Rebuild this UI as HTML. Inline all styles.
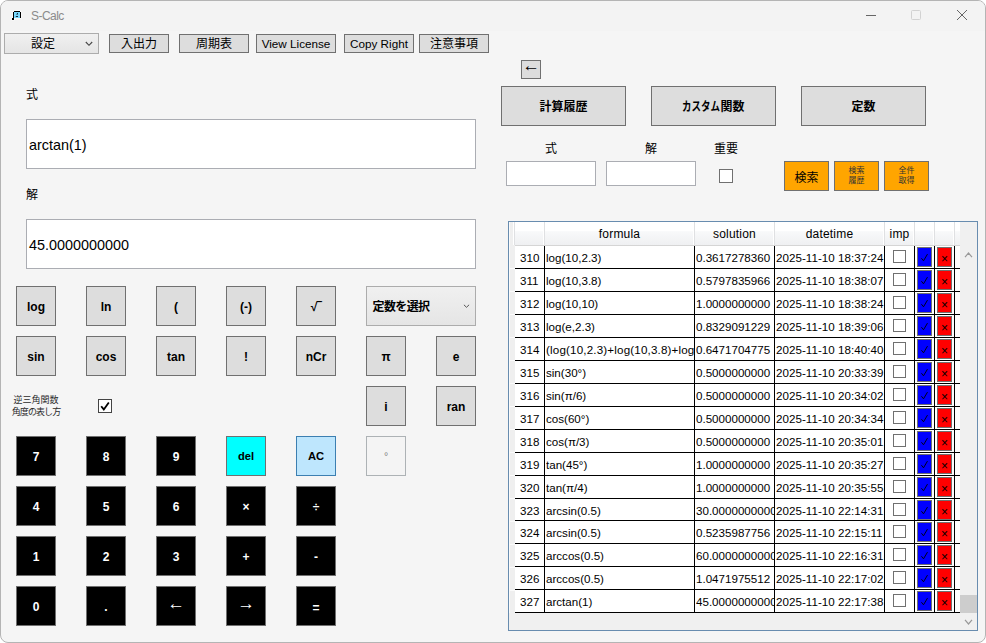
<!DOCTYPE html>
<html lang="ja"><head><meta charset="utf-8"><title>S-Calc</title>
<style>
html,body{margin:0;padding:0}
body{width:986px;height:643px;overflow:hidden;background:#fff;position:relative;
 font-family:"Liberation Sans","Noto Sans CJK JP",sans-serif;font-size:12px;color:#000}
#win{position:absolute;left:0;top:0;width:984px;height:641px;border:1px solid #b4b4b4;border-radius:8px;background:#f5f5f5;overflow:hidden}
#win>*{position:absolute}
/* everything inside #win is positioned relative to the padding box (offset 1,1): use .abs wrapper */
#o{left:-1px;top:-1px;width:986px;height:643px}
#o>*{position:absolute;box-sizing:border-box}
#tb{left:1px;top:1px;width:984px;height:30px;background:#f3f3f3}
#title{left:31px;top:8px;font-size:12px;letter-spacing:-0.55px;color:#8b8b8b;line-height:16px;white-space:nowrap}
.btn{background:#ddd;border:1px solid #707070;display:flex;align-items:center;justify-content:center;white-space:nowrap;line-height:1;font-size:11.7px}
.k{width:40px;height:40px;font-weight:bold;font-size:12px;padding-top:1px}
.btn.j{font-size:12px}
.ar{font-family:"Noto Sans CJK JP","Liberation Sans",sans-serif}
.blk{background:#000;color:#fff}
.lbl{white-space:nowrap;line-height:14px}
.tbx{background:#fff;border:1px solid #abadb3}
.tbx span{position:absolute;left:2px;font-size:14.4px;white-space:nowrap}
.combo{border:1px solid #acacac;background:linear-gradient(#f0f0f0,#e5e5e5);display:flex;align-items:center;white-space:nowrap}
.chk{background:#fff;border:1px solid #707070}
.or{background:#ffa500;border:1px solid #707070;display:flex;align-items:center;justify-content:center;text-align:center;white-space:nowrap}
/* grid */
#grid{left:508px;top:221px;width:470px;height:410px;border:1px solid #688caf;background:#f0f0f0;overflow:hidden}
#gridw{left:509px;top:222px;width:451px;height:391px;background:#fff}
#hdr{left:509px;top:222px;width:451px;height:24px;background:linear-gradient(#fff 0,#fff 38%,#f8f9fa 42%,#eff0f2 100%);border-bottom:1px solid #d5d5d5}
.h{position:absolute;top:223px;height:23px;line-height:23px;text-align:center;font-size:12px;letter-spacing:0.2px;white-space:nowrap}
.vs{width:1px;background:#000;top:246px;height:367px}
.hs{width:2px;top:222px;height:23px;background:linear-gradient(90deg,#fff 50%,#dfe0e2 50%);margin-left:-1px}
.row{left:515px;width:445px;height:23px;border-bottom:1px solid #000}
.row>*{position:absolute;box-sizing:border-box}
.c{top:0;height:22px;line-height:24px;white-space:nowrap;overflow:hidden;font-size:11.6px}
.c0{left:5px;width:25px}
.c1{left:31px;width:149px}
.c2{left:181px;width:78px}
.c3{left:261px;width:108px;letter-spacing:0.03px}
.cb{left:378px;top:4px;width:13px;height:13px;border:1px solid #707070;background:#fff}
.bb{left:402px;top:1px;width:15px;height:20px;background:#00f;border:1px solid #707070}
.bb svg{position:absolute;left:0;top:0}
.rb{left:422px;top:1px;width:15px;height:20px;background:#f00;border:1px solid #707070;display:flex;align-items:center;justify-content:center;font-weight:normal;font-size:12px;line-height:1;padding-top:3px}
.al{font-size:17.5px;font-weight:bold;position:relative;top:-4px;line-height:12px}

</style></head>
<body>
<div id="win"><div id="o">
<div id="tb"></div>
<svg style="left:11px;top:10px" width="12" height="12" viewBox="0 0 12 12"><path d="M0.5 8.2V7.5H1.5V1.5L2.5 0.5H9.5L10.5 1.5V8.5H3.5V10.5H0.5Z" fill="#fff" opacity="0.8"/><rect x="3" y="2" width="6" height="6" fill="#7ad7fb"/><rect x="3" y="1" width="6" height="1" fill="#000"/><rect x="2" y="2" width="1" height="7" fill="#000"/><rect x="9" y="2" width="1" height="6" fill="#000"/><rect x="1" y="8" width="2" height="2" fill="#000"/><path d="M5.2 4.6L6.3 3L6.9 3L6.9 4.6Z" fill="#012"/><rect x="4.8" y="6" width="2.2" height="1" fill="#123"/></svg>
<div id="title">S-Calc</div>
<svg style="left:860px;top:5px" width="120" height="22" viewBox="0 0 120 22"><path d="M6 10.5H16" stroke="#666" stroke-width="1" fill="none"/><rect x="51.5" y="5.5" width="9" height="9" rx="1" fill="none" stroke="#d2d2d2" stroke-width="1"/><path d="M97 5L107 15M107 5L97 15" stroke="#666" stroke-width="1" fill="none"/></svg>

<!-- toolbar -->
<div class="combo" style="left:4px;top:33px;width:95px;height:21px"><span style="position:absolute;left:26px;top:3px;line-height:14px">設定</span><svg style="position:absolute;right:5px;top:7px" width="8" height="6" viewBox="0 0 8 6"><path d="M0.8 1L4 4.3L7.2 1" fill="none" stroke="#444" stroke-width="1.1"/></svg></div>
<div class="btn j" style="left:109px;top:34px;width:60px;height:19px">入出力</div>
<div class="btn j" style="left:179px;top:34px;width:70px;height:19px">周期表</div>
<div class="btn" style="left:256px;top:34px;width:80px;height:19px">View License</div>
<div class="btn" style="left:344px;top:34px;width:70px;height:19px">Copy Right</div>
<div class="btn j" style="left:419px;top:34px;width:70px;height:19px">注意事項</div>

<!-- left -->
<div class="lbl" style="left:26px;top:88px">式</div>
<div class="tbx" style="left:26px;top:119px;width:450px;height:50px"><span style="top:17px;line-height:17px">arctan(1)</span></div>
<div class="lbl" style="left:26px;top:188px">解</div>
<div class="tbx" style="left:26px;top:219px;width:450px;height:50px"><span style="top:17px;line-height:17px">45.0000000000</span></div>

<div class="btn k" style="left:16px;top:286px">log</div>
<div class="btn k" style="left:86px;top:286px">ln</div>
<div class="btn k" style="left:156px;top:286px">(</div>
<div class="btn k" style="left:226px;top:286px">(-)</div>
<div class="btn k" style="left:296px;top:286px">√‾</div>
<div class="combo" style="left:366px;top:286px;width:110px;height:40px;font-weight:bold;padding-top:1px"><span style="position:absolute;left:5.5px;top:13px;line-height:14px;letter-spacing:-0.6px">定数を選択</span><svg style="position:absolute;right:5.5px;top:17px" width="7" height="5" viewBox="0 0 7 5"><path d="M0.9 0.8L3.5 3.3L6.1 0.8" fill="none" stroke="#555" stroke-width="1"/></svg></div>

<div class="btn k" style="left:16px;top:336px">sin</div>
<div class="btn k" style="left:86px;top:336px">cos</div>
<div class="btn k" style="left:156px;top:336px">tan</div>
<div class="btn k" style="left:226px;top:336px">!</div>
<div class="btn k" style="left:296px;top:336px">nCr</div>
<div class="btn k" style="left:366px;top:336px">π</div>
<div class="btn k" style="left:436px;top:336px">e</div>

<div class="lbl" style="left:0px;top:394px;width:72px;text-align:center;font-size:9px;line-height:12px;color:#2a2a2a">逆三角関数<br><span style="letter-spacing:-0.9px">角度の表し方</span></div>
<div class="chk" style="left:98px;top:399px;width:14px;height:14px;border-color:#444"><svg style="position:absolute;left:1px;top:1px" width="10" height="10" viewBox="0 0 10 10"><path d="M1.2 5.2L3.8 8.4L8.8 1.4" fill="none" stroke="#000" stroke-width="1.8"/></svg></div>
<div class="btn k" style="left:366px;top:386px">i</div>
<div class="btn k" style="left:436px;top:386px">ran</div>

<div class="btn k blk" style="left:16px;top:436px">7</div>
<div class="btn k blk" style="left:86px;top:436px">8</div>
<div class="btn k blk" style="left:156px;top:436px">9</div>
<div class="btn k" style="left:226px;top:436px;background:#0ff;font-size:11.2px">del</div>
<div class="btn k" style="left:296px;top:436px;background:#bee6fd;border-color:#3c7fb1;font-size:11.2px">AC</div>
<div class="btn k" style="left:366px;top:436px;background:#f4f4f4;border-color:#adb2b5;color:#838383;font-size:10.5px;font-weight:normal;padding-top:0">°</div>

<div class="btn k blk" style="left:16px;top:486px">4</div>
<div class="btn k blk" style="left:86px;top:486px">5</div>
<div class="btn k blk" style="left:156px;top:486px">6</div>
<div class="btn k blk" style="left:226px;top:486px">×</div>
<div class="btn k blk" style="left:296px;top:486px">÷</div>

<div class="btn k blk" style="left:16px;top:536px">1</div>
<div class="btn k blk" style="left:86px;top:536px">2</div>
<div class="btn k blk" style="left:156px;top:536px">3</div>
<div class="btn k blk" style="left:226px;top:536px">+</div>
<div class="btn k blk" style="left:296px;top:536px">-</div>

<div class="btn k blk" style="left:16px;top:586px">0</div>
<div class="btn k blk" style="left:86px;top:586px">.</div>
<div class="btn k blk" style="left:156px;top:586px"><span class="al">←</span></div>
<div class="btn k blk" style="left:226px;top:586px"><span class="al">→</span></div>
<div class="btn k blk" style="left:296px;top:586px"><span style="position:relative;top:1px">=</span></div>

<!-- right -->
<div class="btn" style="left:521px;top:60px;width:20px;height:19px"><span class="al" style="font-weight:normal;top:-5px">←</span></div>
<div class="btn j" style="left:501px;top:86px;width:125px;height:40px;font-weight:bold;padding-top:1px">計算履歴</div>
<div class="btn j" style="left:651px;top:86px;width:125px;height:40px;font-weight:bold;padding-top:1px"><span style="display:inline-block;transform:scaleX(0.79);transform-origin:0 50%;margin-right:-10px">カスタム</span>関数</div>
<div class="btn j" style="left:801px;top:86px;width:125px;height:40px;font-weight:bold;padding-top:1px">定数</div>

<div class="lbl" style="left:531px;top:142px;width:40px;text-align:center">式</div>
<div class="lbl" style="left:631px;top:142px;width:40px;text-align:center">解</div>
<div class="lbl" style="left:706px;top:142px;width:40px;text-align:center">重要</div>
<div class="tbx" style="left:506px;top:161px;width:90px;height:25px"></div>
<div class="tbx" style="left:606px;top:161px;width:90px;height:25px"></div>
<div class="chk" style="left:719px;top:169px;width:14px;height:14px"></div>
<div class="or" style="left:784px;top:161px;width:45px;height:30px;font-size:12px">検索</div>
<div class="or" style="left:834px;top:161px;width:45px;height:30px;font-size:8px;line-height:10px;color:#333">検索<br>履歴</div>
<div class="or" style="left:884px;top:161px;width:45px;height:30px;font-size:8px;line-height:10px;color:#333">全件<br>取得</div>

<!-- data grid -->
<div id="grid"></div>
<div id="gridw"></div>
<div id="hdr"></div>
<div style="left:509px;top:222px;width:6px;height:391px;background:#efefef;border-left:1px solid #fafafa"></div><div style="left:509px;top:246px;width:6px;height:367px;background:repeating-linear-gradient(180deg,rgba(255,255,255,0) 0,rgba(255,255,255,0) 22px,#fbfbfb 22px,#fbfbfb 23px)"></div>
<div class="h" style="left:545px;width:149px">formula</div>
<div class="h" style="left:695px;width:79px">solution</div>
<div class="h" style="left:775px;width:109px">datetime</div>
<div class="h" style="left:885px;width:29px">imp</div>
<div class="hs" style="left:514px"></div><div class="hs" style="left:544px"></div><div class="hs" style="left:694px"></div><div class="hs" style="left:774px"></div><div class="hs" style="left:884px"></div><div class="hs" style="left:914px"></div><div class="hs" style="left:934px"></div><div class="hs" style="left:954px"></div>
<div class="row" style="top:246px">
<span class="c c0">310</span><span class="c c1">log(10,2.3)</span><span class="c c2">0.3617278360</span><span class="c c3">2025-11-10 18:37:24</span>
<i class="cb"></i><b class="bb"><svg width="13" height="18" viewBox="0 0 13 18"><path d="M3.4 10.2L5.5 12.8L9.5 6.1" fill="none" stroke="#000" stroke-width="0.9"/></svg></b><b class="rb">×</b>
</div>
<div class="row" style="top:269px">
<span class="c c0">311</span><span class="c c1">log(10,3.8)</span><span class="c c2">0.5797835966</span><span class="c c3">2025-11-10 18:38:07</span>
<i class="cb"></i><b class="bb"><svg width="13" height="18" viewBox="0 0 13 18"><path d="M3.4 10.2L5.5 12.8L9.5 6.1" fill="none" stroke="#000" stroke-width="0.9"/></svg></b><b class="rb">×</b>
</div>
<div class="row" style="top:292px">
<span class="c c0">312</span><span class="c c1">log(10,10)</span><span class="c c2">1.0000000000</span><span class="c c3">2025-11-10 18:38:24</span>
<i class="cb"></i><b class="bb"><svg width="13" height="18" viewBox="0 0 13 18"><path d="M3.4 10.2L5.5 12.8L9.5 6.1" fill="none" stroke="#000" stroke-width="0.9"/></svg></b><b class="rb">×</b>
</div>
<div class="row" style="top:315px">
<span class="c c0">313</span><span class="c c1">log(e,2.3)</span><span class="c c2">0.8329091229</span><span class="c c3">2025-11-10 18:39:06</span>
<i class="cb"></i><b class="bb"><svg width="13" height="18" viewBox="0 0 13 18"><path d="M3.4 10.2L5.5 12.8L9.5 6.1" fill="none" stroke="#000" stroke-width="0.9"/></svg></b><b class="rb">×</b>
</div>
<div class="row" style="top:338px">
<span class="c c0">314</span><span class="c c1" style="letter-spacing:0.17px">(log(10,2.3)+log(10,3.8)+log(10,10))/3</span><span class="c c2">0.6471704775</span><span class="c c3">2025-11-10 18:40:40</span>
<i class="cb"></i><b class="bb"><svg width="13" height="18" viewBox="0 0 13 18"><path d="M3.4 10.2L5.5 12.8L9.5 6.1" fill="none" stroke="#000" stroke-width="0.9"/></svg></b><b class="rb">×</b>
</div>
<div class="row" style="top:361px">
<span class="c c0">315</span><span class="c c1">sin(30°)</span><span class="c c2">0.5000000000</span><span class="c c3">2025-11-10 20:33:39</span>
<i class="cb"></i><b class="bb"><svg width="13" height="18" viewBox="0 0 13 18"><path d="M3.4 10.2L5.5 12.8L9.5 6.1" fill="none" stroke="#000" stroke-width="0.9"/></svg></b><b class="rb">×</b>
</div>
<div class="row" style="top:384px">
<span class="c c0">316</span><span class="c c1">sin(π/6)</span><span class="c c2">0.5000000000</span><span class="c c3">2025-11-10 20:34:02</span>
<i class="cb"></i><b class="bb"><svg width="13" height="18" viewBox="0 0 13 18"><path d="M3.4 10.2L5.5 12.8L9.5 6.1" fill="none" stroke="#000" stroke-width="0.9"/></svg></b><b class="rb">×</b>
</div>
<div class="row" style="top:407px">
<span class="c c0">317</span><span class="c c1">cos(60°)</span><span class="c c2">0.5000000000</span><span class="c c3">2025-11-10 20:34:34</span>
<i class="cb"></i><b class="bb"><svg width="13" height="18" viewBox="0 0 13 18"><path d="M3.4 10.2L5.5 12.8L9.5 6.1" fill="none" stroke="#000" stroke-width="0.9"/></svg></b><b class="rb">×</b>
</div>
<div class="row" style="top:430px">
<span class="c c0">318</span><span class="c c1">cos(π/3)</span><span class="c c2">0.5000000000</span><span class="c c3">2025-11-10 20:35:01</span>
<i class="cb"></i><b class="bb"><svg width="13" height="18" viewBox="0 0 13 18"><path d="M3.4 10.2L5.5 12.8L9.5 6.1" fill="none" stroke="#000" stroke-width="0.9"/></svg></b><b class="rb">×</b>
</div>
<div class="row" style="top:453px">
<span class="c c0">319</span><span class="c c1">tan(45°)</span><span class="c c2">1.0000000000</span><span class="c c3">2025-11-10 20:35:27</span>
<i class="cb"></i><b class="bb"><svg width="13" height="18" viewBox="0 0 13 18"><path d="M3.4 10.2L5.5 12.8L9.5 6.1" fill="none" stroke="#000" stroke-width="0.9"/></svg></b><b class="rb">×</b>
</div>
<div class="row" style="top:476px">
<span class="c c0">320</span><span class="c c1">tan(π/4)</span><span class="c c2">1.0000000000</span><span class="c c3">2025-11-10 20:35:55</span>
<i class="cb"></i><b class="bb"><svg width="13" height="18" viewBox="0 0 13 18"><path d="M3.4 10.2L5.5 12.8L9.5 6.1" fill="none" stroke="#000" stroke-width="0.9"/></svg></b><b class="rb">×</b>
</div>
<div class="row" style="top:499px;height:22px">
<span class="c c0">323</span><span class="c c1">arcsin(0.5)</span><span class="c c2">30.0000000000</span><span class="c c3">2025-11-10 22:14:31</span>
<i class="cb"></i><b class="bb"><svg width="13" height="18" viewBox="0 0 13 18"><path d="M3.4 10.2L5.5 12.8L9.5 6.1" fill="none" stroke="#000" stroke-width="0.9"/></svg></b><b class="rb">×</b>
</div>
<div class="row" style="top:521px">
<span class="c c0">324</span><span class="c c1">arcsin(0.5)</span><span class="c c2">0.5235987756</span><span class="c c3">2025-11-10 22:15:11</span>
<i class="cb"></i><b class="bb"><svg width="13" height="18" viewBox="0 0 13 18"><path d="M3.4 10.2L5.5 12.8L9.5 6.1" fill="none" stroke="#000" stroke-width="0.9"/></svg></b><b class="rb">×</b>
</div>
<div class="row" style="top:544px">
<span class="c c0">325</span><span class="c c1">arccos(0.5)</span><span class="c c2">60.0000000000</span><span class="c c3">2025-11-10 22:16:31</span>
<i class="cb"></i><b class="bb"><svg width="13" height="18" viewBox="0 0 13 18"><path d="M3.4 10.2L5.5 12.8L9.5 6.1" fill="none" stroke="#000" stroke-width="0.9"/></svg></b><b class="rb">×</b>
</div>
<div class="row" style="top:567px">
<span class="c c0">326</span><span class="c c1">arccos(0.5)</span><span class="c c2">1.0471975512</span><span class="c c3">2025-11-10 22:17:02</span>
<i class="cb"></i><b class="bb"><svg width="13" height="18" viewBox="0 0 13 18"><path d="M3.4 10.2L5.5 12.8L9.5 6.1" fill="none" stroke="#000" stroke-width="0.9"/></svg></b><b class="rb">×</b>
</div>
<div class="row" style="top:590px">
<span class="c c0">327</span><span class="c c1">arctan(1)</span><span class="c c2">45.0000000000</span><span class="c c3">2025-11-10 22:17:38</span>
<i class="cb"></i><b class="bb"><svg width="13" height="18" viewBox="0 0 13 18"><path d="M3.4 10.2L5.5 12.8L9.5 6.1" fill="none" stroke="#000" stroke-width="0.9"/></svg></b><b class="rb">×</b>
</div>
<div class="vs" style="left:544px"></div><div class="vs" style="left:694px"></div><div class="vs" style="left:774px"></div><div class="vs" style="left:884px"></div><div class="vs" style="left:914px"></div><div class="vs" style="left:934px"></div><div class="vs" style="left:954px"></div>
<div style="left:960px;top:595px;width:17px;height:18px;background:#cdcdcd"></div>
<svg style="left:964px;top:251px" width="9" height="8" viewBox="0 0 9 8"><path d="M1 6.2L4.5 2L8 6.2" fill="none" stroke="#999" stroke-width="1.2"/></svg>
<svg style="left:964px;top:618px" width="9" height="8" viewBox="0 0 9 8"><path d="M1 1.8L4.5 6L8 1.8" fill="none" stroke="#999" stroke-width="1.2"/></svg>
</div></div>

</body></html>
